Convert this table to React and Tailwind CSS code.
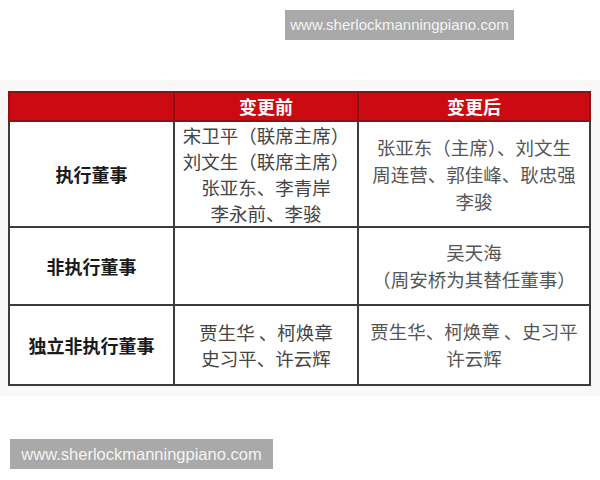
import React from 'react';

const cjk = { fontFamily: '"Noto Sans CJK SC", "Noto Sans", sans-serif' };

const rows = [
  {
    label: '执行董事',
    before: ['宋卫平（联席主席）', '刘文生（联席主席）', '张亚东、李青岸', '李永前、李骏'],
    after: ['张亚东（主席）、刘文生', '周连营、郭佳峰、耿忠强', '李骏'],
    h: 'h-[104px]',
  },
  {
    label: '非执行董事',
    before: [],
    after: ['吴天海', '（周安桥为其替任董事）'],
    h: 'h-[78px]',
  },
  {
    label: '独立非执行董事',
    before: ['贾生华 、柯焕章', '史习平、许云辉'],
    after: ['贾生华、柯焕章 、史习平', '许云辉'],
    h: 'h-[80px]',
  },
];

const Watermark = ({ className }) => (
  <div
    className={`bg-[#a9a9a9] text-[#f4f4f4] h-[30px] flex items-center justify-center ${className}`}
    style={{ fontFamily: '"Liberation Sans", Arial, sans-serif' }}
  >
    www.sherlockmanningpiano.com
  </div>
);

const App = () => {
  return (
    <div className="w-[600px] h-[480px] bg-white flex flex-col" style={cjk}>
      <div className="flex justify-end pr-[86px] pt-[10px]">
        <Watermark className="w-[229px] text-[15px]" />
      </div>

      <div className="mt-[40px] bg-[#f8f8f8] pt-[11px] pb-[10px] pl-[8px]">
        <table className="table-fixed border-collapse w-[581px]">
          <colgroup>
            <col className="w-[165px]" />
            <col className="w-[184px]" />
            <col className="w-[232px]" />
          </colgroup>
          <thead>
            <tr className="h-[29px] bg-[#cc0a12]">
              <th className="border-2 border-[#8a1414]"></th>
              <th className="border-2 border-[#8a1414] text-white text-[18px] font-bold">变更前</th>
              <th className="border-2 border-[#8a1414] text-white text-[18px] font-bold">变更后</th>
            </tr>
          </thead>
          <tbody className="bg-white">
            {rows.map((r) => (
              <tr key={r.label} className={r.h}>
                <td className="border-2 border-[#3c3c3c] p-0 text-center text-[18px] font-bold text-[#1a1a1a]">
                  {r.label}
                </td>
                <td className="border-2 border-[#3c3c3c] p-0 text-center text-[18.5px] leading-[26px] text-[#444]">
                  {r.before.map((l) => (
                    <div key={l} className="whitespace-nowrap">{l}</div>
                  ))}
                </td>
                <td className="border-2 border-[#3c3c3c] p-0 text-center text-[18.5px] leading-[27px] text-[#555]">
                  {r.after.map((l) => (
                    <div key={l} className="whitespace-nowrap">{l}</div>
                  ))}
                </td>
              </tr>
            ))}
          </tbody>
        </table>
      </div>

      <div className="mt-[43px] pl-[10px]">
        <Watermark className="w-[263px] text-[16.5px]" />
      </div>
    </div>
  );
};

export default App;
